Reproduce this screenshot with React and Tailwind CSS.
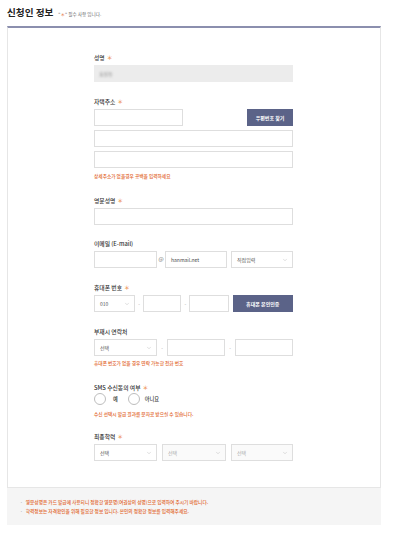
import { ChevronDown } from "lucide-react";

const font = { fontFamily: '"Noto Sans CJK KR", "Noto Sans", sans-serif' };

function Label({ children, required, className = "" }) {
  return (
    <div className={`h-[8px] leading-[8px] text-[5.8px] font-medium text-[#333] mb-[3px] ${className}`}>
      {children}
      {required && <span className="ml-[2px] text-[#ec8a47]">＊</span>}
    </div>
  );
}

function Input({ className = "", children }) {
  return (
    <div
      className={`h-[17px] border border-[#dedede] bg-white flex items-center px-[5px] text-[5px] text-[#444] ${className}`}
    >
      {children}
    </div>
  );
}

function Select({ text, className = "", disabled }) {
  return (
    <div
      className={`h-[17px] border border-[#dedede] flex items-center justify-between pl-[5px] pr-[4px] text-[5px] ${
        disabled ? "bg-[#fafafa] text-[#aaa]" : "bg-white text-[#555]"
      } ${className}`}
    >
      <span>{text}</span>
      <ChevronDown size={6} strokeWidth={1.5} className="text-[#aaa]" />
    </div>
  );
}

function Note({ children, className = "" }) {
  return (
    <div className={`h-[8px] leading-[8px] text-[4.7px] font-medium text-[#e2682f] ${className}`}>
      {children}
    </div>
  );
}

function Dash() {
  return <span className="text-[5px] text-[#999] w-[8px] text-center">-</span>;
}

export default function App() {
  return (
    <div className="w-[405px] h-[539px] bg-white" style={font}>
      {/* header */}
      <div className="h-[26px] flex items-center pl-[7px] gap-[5px]">
        <h2 className="text-[9.6px] font-bold text-[#222] leading-none">신청인 정보</h2>
        <span className="text-[4.6px] text-[#666] mt-[2px]">
          "<span className="text-[#e2682f]">＊</span>" 필수 사항 입니다.
        </span>
      </div>

      {/* card */}
      <div className="ml-[7px] w-[374px] border-t-2 border-t-[#8b8fae] border-x border-b border-[#e6e6e6] pt-[26px] pb-[26px]">
        <div className="w-[199px] ml-[86px] flex flex-col">
          {/* 성명 */}
          <Label required>성명</Label>
          <div className="h-[17px] bg-[#ececec] flex items-center px-[5px]">
            <span className="text-[5px] text-[#888] blur-[0.8px]">홍길동</span>
          </div>

          {/* 자택주소 */}
          <Label required className="mt-[16px]">자택주소</Label>
          <div className="flex justify-between">
            <Input className="w-[89px]" />
            <button className="h-[17px] w-[46px] bg-[#5b6388] text-white text-[5px] font-bold">
              우편번호 찾기
            </button>
          </div>
          <Input className="mt-[4px]" />
          <Input className="mt-[4px]" />
          <Note className="mt-[4px]">상세주소가 없을경우 공백을 입력하세요</Note>

          {/* 영문성명 */}
          <Label required className="mt-[17px]">영문성명</Label>
          <Input />

          {/* 이메일 */}
          <Label className="mt-[15px]">이메일 (E-mail)</Label>
          <div className="flex items-center">
            <Input className="w-[63px]" />
            <span className="w-[8px] text-center text-[5.5px] text-[#555]">@</span>
            <Input className="w-[62px]">hanmail.net</Input>
            <Select text="직접입력" className="w-[62px] ml-[4px]" />
          </div>

          {/* 휴대폰 번호 */}
          <Label required className="mt-[16px]">휴대폰 번호</Label>
          <div className="flex items-center">
            <Select text="010" className="w-[42px]" />
            <Dash />
            <Input className="w-[39px]" />
            <Dash />
            <Input className="w-[40px]" />
            <button className="ml-[4px] h-[17px] w-[62px] bg-[#5b6388] text-white text-[5px] font-bold">
              휴대폰 본인인증
            </button>
          </div>

          {/* 부재시 연락처 */}
          <Label className="mt-[16px]">부재시 연락처</Label>
          <div className="flex items-center">
            <Select text="선택" className="w-[63px]" />
            <span className="w-[10px] text-center text-[5px] text-[#999]">-</span>
            <Input className="w-[58px]" />
            <span className="w-[10px] text-center text-[5px] text-[#999]">-</span>
            <Input className="w-[58px]" />
          </div>
          <Note className="mt-[3px]">휴대폰 번호가 없을 경우 연락 가능한 전화 번호</Note>

          {/* SMS */}
          <Label required className="mt-[17px] !mb-0">SMS 수신동의 여부</Label>
          <div className="mt-[1px] h-[12px] flex items-center text-[5.2px] font-medium text-[#333]">
            <span className="w-[12px] h-[12px] rounded-full border border-[#bdbdbd] bg-white" />
            <span className="ml-[7px]">예</span>
            <span className="ml-[10px] w-[12px] h-[12px] rounded-full border border-[#bdbdbd] bg-white" />
            <span className="ml-[5px]">아니요</span>
          </div>
          <Note className="mt-[5px]">수신 선택시 발급 결과를 문자로 받으실 수 있습니다.</Note>

          {/* 최종학력 */}
          <Label required className="mt-[15px]">최종학력</Label>
          <div className="flex items-center justify-between">
            <Select text="선택" className="w-[63px]" />
            <Select text="선택" className="w-[64px]" disabled />
            <Select text="선택" className="w-[62px]" disabled />
          </div>
        </div>
      </div>

      {/* notice */}
      <div className="ml-[7px] w-[374px] bg-[#f5f5f5] pt-[10px] pb-[9px] pl-[13px]">
        <ul className="text-[4.7px] leading-[9px] font-medium text-[#e2682f]">
          <li className="flex gap-[3px]">
            <span className="text-[#aaa]">·</span>
            영문성명은 카드 발급에 사용되니 정확한 영문명(여권상의 성명)으로 입력하여 주시기 바랍니다.
          </li>
          <li className="flex gap-[3px]">
            <span className="text-[#aaa]">·</span>
            학력정보는 자격확인을 위해 필요한 정보 입니다. 본인의 정확한 정보를 입력해주세요.
          </li>
        </ul>
      </div>
    </div>
  );
}
